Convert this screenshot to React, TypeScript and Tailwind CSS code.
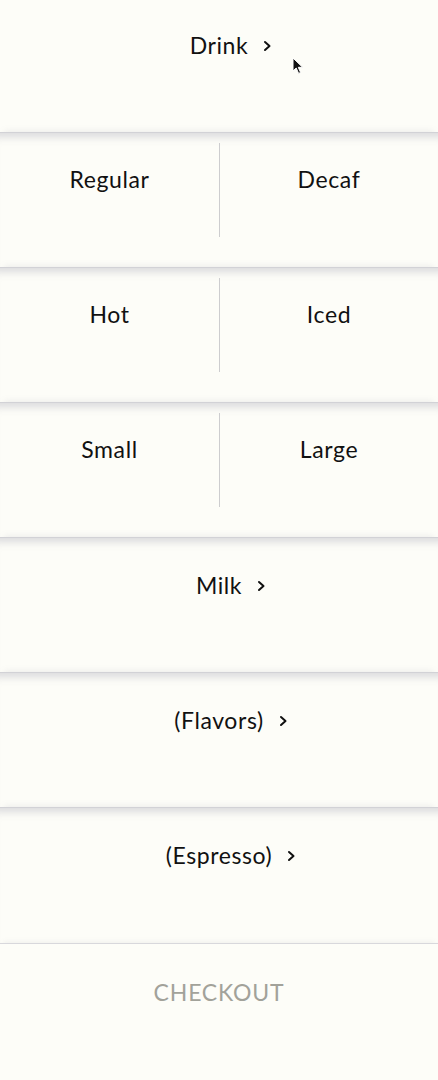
import React from 'react';

const sep = 'shadow-[inset_0_12px_9px_-8px_rgba(140,140,160,0.3),0_-5px_6px_-4px_rgba(140,140,160,0.15)] border-t border-[#d2d2d6]';

// label stays centred, the chevron hangs off its right edge
function Label({ text }: { text: string }) {
  return (
    <span className="relative">
      {text}
      <svg width="9" height="11" viewBox="0 0 9 11" className="absolute left-full top-1/2 -translate-y-1/2 ml-[15px] mt-[1px]">
        <polyline points="2,1.5 6.5,5.5 2,9.5" fill="none" stroke="#111" strokeWidth="2" strokeLinecap="round" strokeLinejoin="round" />
      </svg>
    </span>
  );
}

function NavRow({ label, first = false, h = 'h-[135px]' }: { label: string; first?: boolean; h?: string }) {
  return (
    <div className={first ? 'h-[132px]' : h + ' ' + sep}>
      <div className={'flex items-center justify-center ' + (first ? 'h-[90px]' : 'h-[96px] -mt-px')}>
        <Label text={label} />
      </div>
    </div>
  );
}

function PairRow({ left, right }: { left: string; right: string }) {
  return (
    <div className={'h-[135px] grid grid-cols-2 ' + sep}>
      <div className="mt-[10px] h-[94px] flex items-center justify-center pb-[22px]">{left}</div>
      <div className="mt-[10px] h-[94px] flex items-center justify-center pb-[22px] border-l border-[#cdcdcf]">{right}</div>
    </div>
  );
}

export default function App() {
  return (
    <div className="relative w-[438px] h-[1080px] overflow-hidden bg-[#fdfdf8] text-[#111] text-[23px] tracking-[0.6px] font-['Lato',sans-serif]">
      <NavRow label="Drink" first />
      <PairRow left="Regular" right="Decaf" />
      <PairRow left="Hot" right="Iced" />
      <PairRow left="Small" right="Large" />
      <NavRow label="Milk" />
      <NavRow label="(Flavors)" />
      <NavRow label="(Espresso)" h="h-[136px]" />
      <div className="h-[137px] border-t border-[#d8d8dc] shadow-[0_-4px_5px_-3px_rgba(140,140,160,0.12)]">
        <div className="flex items-center justify-center h-[96px] text-[#a2a29a] tracking-[0.8px]">CHECKOUT</div>
      </div>
      {/* mouse pointer */}
      <svg className="absolute left-[292px] top-[57px]" width="12" height="18" viewBox="0 0 12 18">
        <path d="M1 1 L1 14 L4.2 11 L6.6 16.4 L8.6 15.5 L6.3 10.3 L10.6 10.3 Z" fill="#111" stroke="#fff" strokeWidth="1" />
      </svg>
    </div>
  );
}
